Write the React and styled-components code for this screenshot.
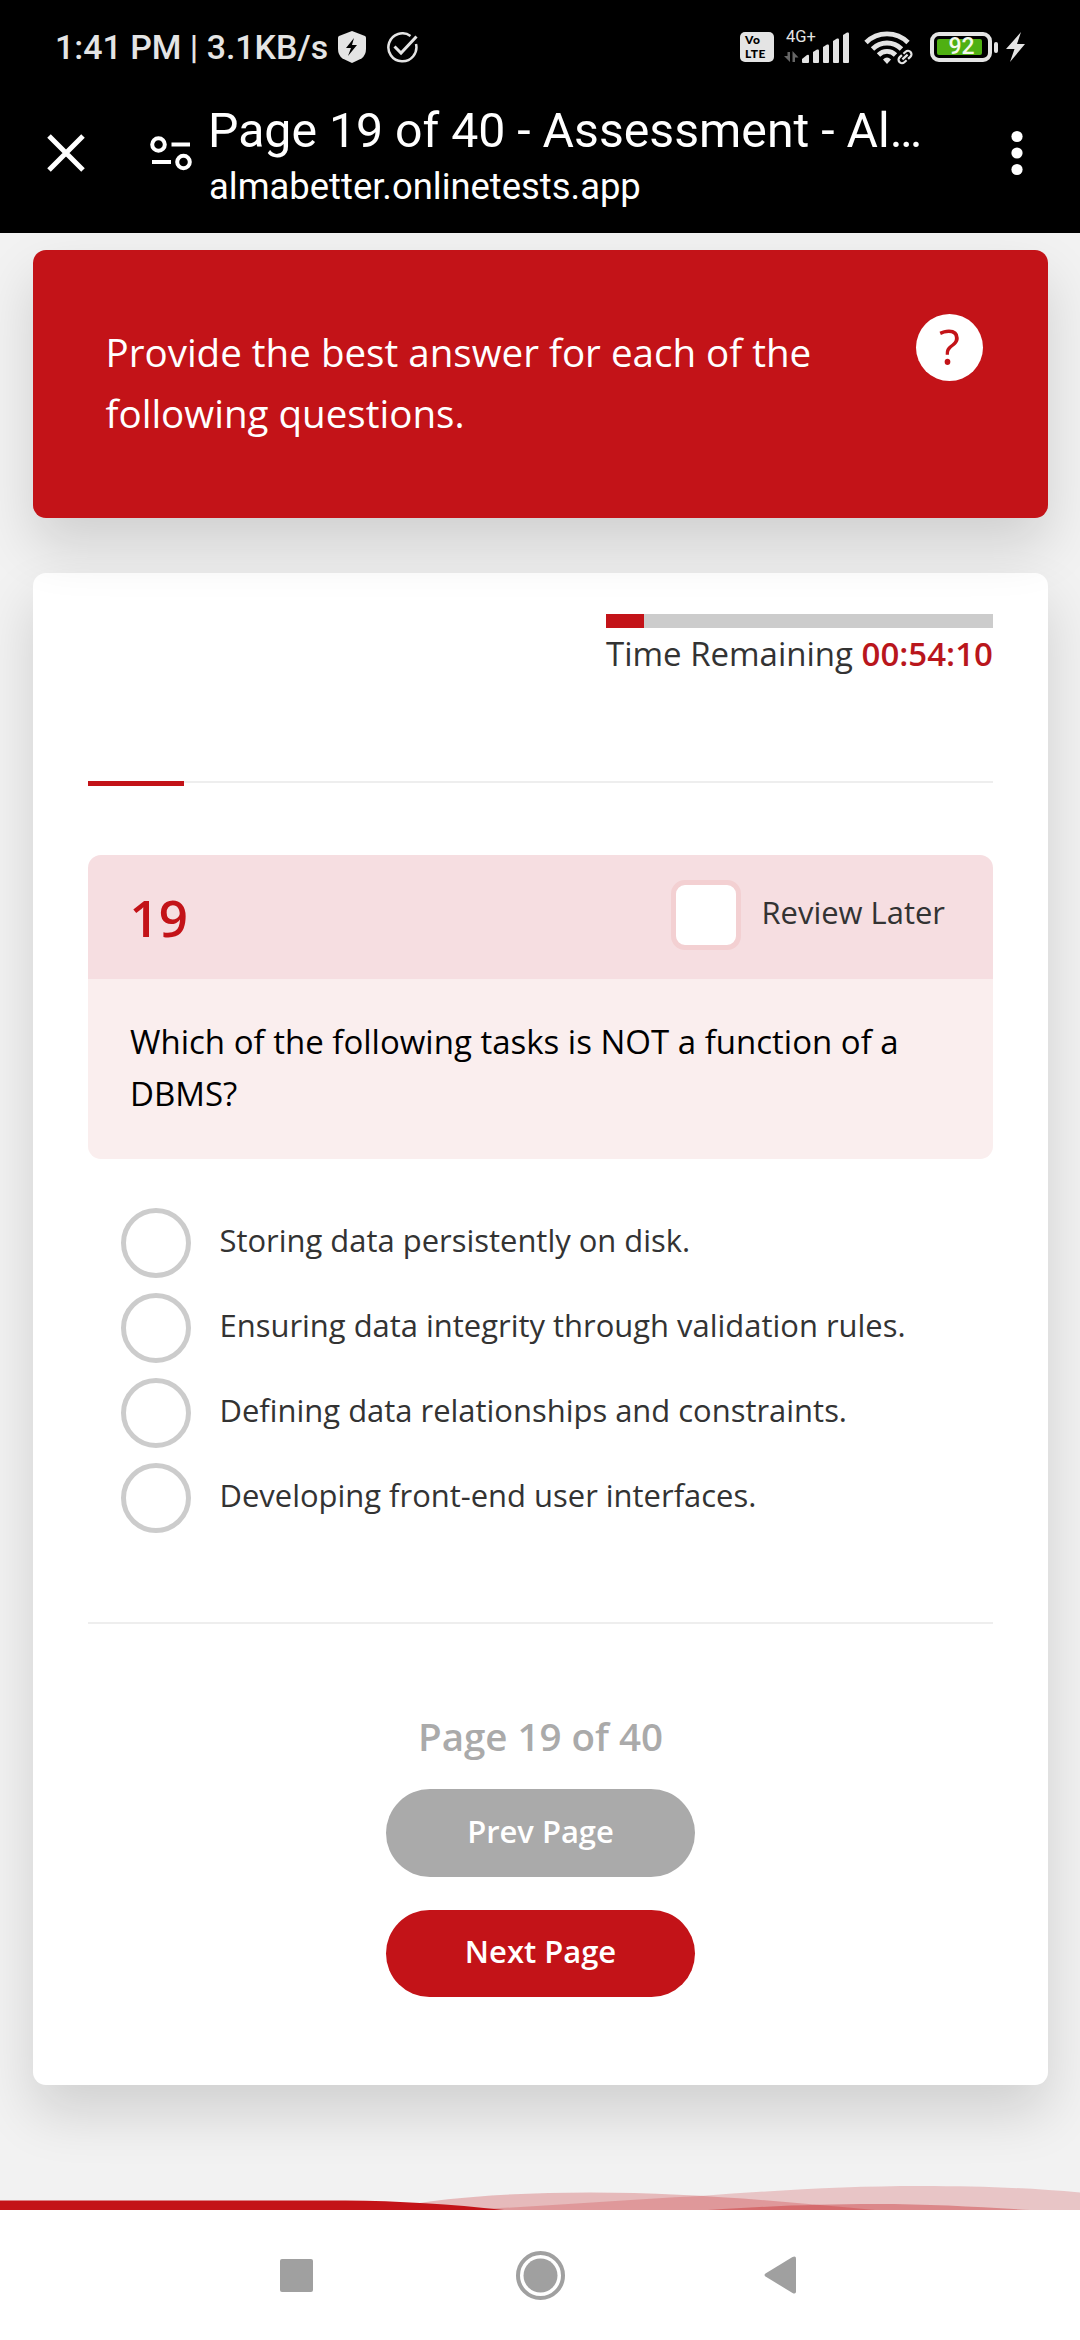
import React from 'react';
import styled, { createGlobalStyle } from 'styled-components';

const RED = '#c31318';
const SHADOW = '0 27.5px 55px rgba(0, 0, 0, 0.14)';

const GlobalStyle = createGlobalStyle`
  *, *::before, *::after { box-sizing: border-box; }
  body { margin: 0; background: #fff; }
  p, h1, h2 { margin: 0; font-weight: inherit; }
`;

const Screen = styled.div`
  display: flex;
  flex-direction: column;
  width: 1080px;
  height: 2340px;
  overflow: hidden;
  font-family: 'Open Sans', 'Noto Sans', sans-serif;
  color: #333;
`;

/* ---------- system and browser header ---------- */

const Header = styled.header`
  position: relative;
  z-index: 3;
  flex: none;
  height: 233px;
  background: #000;
  color: #fff;
  font-family: Roboto, 'Noto Sans', sans-serif;
`;

const StatusBar = styled.div`
  display: flex;
  align-items: center;
  height: 94px;
  padding: 0 55px 0 55px;
  color: #e4e4e4;
`;

const StatusText = styled.span`
  font-size: 33.9px;
  line-height: 40px;
  font-weight: 500;
  white-space: nowrap;
  margin-top: 2px;
`;

const StatusIcon = styled.svg`
  flex: none;
  display: block;
  margin-left: ${(p) => p.$gap || 0}px;
`;

const Spacer = styled.div`
  flex: 1;
`;

const VolteBadge = styled.div`
  display: flex;
  flex-direction: column;
  justify-content: center;
  width: 34px;
  height: 30px;
  padding-left: 5px;
  border-radius: 5px;
  background: #e4e4e4;
  color: #000;
  font: 900 12px/14px Lato, 'Open Sans', sans-serif;
  letter-spacing: 0.5px;
`;

const Signal = styled.div`
  position: relative;
  width: 66px;
  height: 34px;
  margin-left: 10px;
`;

const NetworkLabel = styled.span`
  position: absolute;
  left: 2px;
  top: -2px;
  font-size: 16.5px;
  line-height: 17px;
`;

const Battery = styled.div`
  display: flex;
  width: 62px;
  height: 30px;
  margin-left: 16px;
  padding: 3px;
  border: 4px solid #e4e4e4;
  border-radius: 9px;
`;

const BatteryLevel = styled.div`
  display: flex;
  align-items: center;
  justify-content: center;
  width: 45px;
  height: 16px;
  padding-left: 4px;
  border-radius: 2px;
  background: #4fb012;
  color: #f4f9ee;
  font-size: 23px;
  line-height: 16px;
  font-weight: 500;
`;

const BatteryTip = styled.div`
  width: 4px;
  height: 11px;
  margin-left: 2px;
  border-radius: 2px;
  background: #e4e4e4;
`;

const Toolbar = styled.div`
  display: flex;
  align-items: flex-start;
  padding: 8px 56px 0 46px;
`;

const ToolbarIcon = styled.svg`
  flex: none;
  display: block;
  margin: ${(p) => p.$margin};
`;

const TitleBlock = styled.div`
  flex: 1;
  min-width: 0;
  margin: 1px 0 0 16px;
  white-space: nowrap;
`;

const PageTitle = styled.h1`
  font-size: 48.2px;
  line-height: 56px;
`;

const PageUrl = styled.p`
  margin-top: 6px;
  padding-left: 1px;
  font-size: 36.4px;
  line-height: 44px;
`;

/* ---------- page ---------- */

const Content = styled.main`
  flex: 1;
  display: flex;
  flex-direction: column;
  padding-top: 17px;
  background: #f2f2f2;
`;

const Instructions = styled.section`
  position: relative;
  z-index: 1;
  display: flex;
  justify-content: space-between;
  flex: none;
  height: 268px;
  margin: 0 32px 0 33px;
  padding: 71.5px 65px 0 72.5px;
  border-radius: 13px;
  background: ${RED};
  color: #fff;
  box-shadow: ${SHADOW};
`;

const InstructionText = styled.p`
  width: 730px;
  font-size: 38.55px;
  line-height: 61.6px;
`;

const HelpButton = styled.div`
  display: flex;
  align-items: center;
  justify-content: center;
  width: 67px;
  height: 67px;
  margin-top: -7.5px;
  padding-bottom: 3px;
  border-radius: 50%;
  background: #fff;
  color: ${RED};
  font-size: 49.5px;
  line-height: 66px;
`;

const TestCard = styled.section`
  display: flex;
  flex-direction: column;
  flex: none;
  height: 1512px;
  margin: 55px 32px 0 33px;
  padding: 41px 55px 0;
  border-radius: 13px;
  background: #fff;
  box-shadow: ${SHADOW};
`;

const Timer = styled.div`
  align-self: flex-end;
  width: 387px;
`;

const TimerTrack = styled.div`
  height: 14px;
  background: #ccc;
`;

const TimerFill = styled.div`
  width: 38px;
  height: 100%;
  background: ${RED};
`;

const TimerText = styled.p`
  margin-top: 3px;
  font-size: 33px;
  line-height: 45px;
  white-space: nowrap;
`;

const TimerValue = styled.b`
  font-weight: 600;
  color: #b9161c;
`;

const Divider = styled.div`
  flex: none;
  height: 2px;
  margin-top: ${(p) => p.$top}px;
  background: #eee;
`;

const PageProgress = styled.div`
  width: 96px;
  height: 5px;
  background: ${RED};
`;

const Question = styled.div`
  flex: none;
  margin-top: 72px;
  border-radius: 13px;
  overflow: hidden;
`;

const QuestionHead = styled.div`
  display: flex;
  align-items: center;
  height: 124px;
  padding: 0 48px 0 41.5px;
  background: #f6dee1;
`;

const QuestionNumber = styled.h2`
  flex: 1;
  font-size: 51px;
  font-weight: 600;
  line-height: 66px;
  color: ${RED};
`;

const ReviewCheckbox = styled.div`
  width: 70px;
  height: 70px;
  margin: 0 20.5px 4px 0;
  border: 5px solid #f3d0d2;
  border-radius: 14px;
  background: #fff;
`;

const ReviewLabel = styled.span`
  margin-bottom: 10px;
  font-size: 30.94px;
  line-height: 42px;
  white-space: nowrap;
`;

const QuestionBody = styled.p`
  height: 180px;
  padding: 36.5px 40px 0 42px;
  background: #faeeee;
  color: #000;
  font-size: 33px;
  line-height: 52.8px;
`;

const Options = styled.div`
  display: flex;
  flex-direction: column;
  gap: 15px;
  margin: 49px 0 0 33px;
`;

const Option = styled.div`
  display: flex;
  align-items: center;
  gap: 28.5px;
  height: 70px;
`;

const Radio = styled.div`
  width: 70px;
  height: 70px;
  border: 5px solid #ccc;
  border-radius: 50%;
`;

const OptionLabel = styled.span`
  margin-bottom: 6px;
  font-size: 30.94px;
  line-height: 42px;
  white-space: nowrap;
`;

const Pager = styled.div`
  display: flex;
  flex-direction: column;
  align-items: center;
  margin-top: 86px;
`;

const PagerLabel = styled.p`
  margin-bottom: 27px;
  font-size: 38.5px;
  font-weight: 600;
  line-height: 52px;
  color: #aaa;
`;

const PagerButton = styled.div`
  display: flex;
  align-items: center;
  justify-content: center;
  width: 309px;
  height: ${(p) => (p.$primary ? 87 : 88)}px;
  margin-bottom: 33px;
  padding-bottom: 5px;
  border-radius: 44px;
  background: ${(p) => (p.$primary ? RED : '#aaa')};
  color: #fff;
  font-size: 30.94px;
  font-weight: 600;
  line-height: 42px;
`;

const Waves = styled.svg`
  display: block;
  flex: none;
  margin-top: auto;
`;

const NavBar = styled.nav`
  position: relative;
  z-index: 2;
  display: flex;
  align-items: center;
  flex: none;
  height: 130px;
  padding-left: 280px;
  background: #fff;
`;

const NavIcon = styled.svg`
  display: block;
  margin-right: ${(p) => p.$gap || 0}px;
`;

const options = [
  'Storing data persistently on disk.',
  'Ensuring data integrity through validation rules.',
  'Defining data relationships and constraints.',
  'Developing front-end user interfaces.',
];

function SystemStatus() {
  return (
    <StatusBar>
      <StatusText>1:41 PM | 3.1KB/s</StatusText>
      <StatusIcon $gap={10} width="28" height="32" viewBox="0 0 28 32">
        <path d="M14 0 27 5q1 .5 1 2v11q0 6-4.500 9.500L14 32 4.500 27.500Q0 24 0 18V7q0-1.500 1-2Z" fill="currentColor" />
        <path d="M16 7 8 17h5l-3 8 9-11h-5Z" fill="#000" />
      </StatusIcon>
      <StatusIcon $gap={21} width="31" height="31" viewBox="0 0 31 31" fill="none" stroke="currentColor" strokeWidth="2.500">
        <path d="M23.500 3.900A14 14 0 1 0 29 12" />
        <path d="m7.500 14.500 6.500 6.500L29.500 4.500" strokeWidth="3" />
      </StatusIcon>
      <Spacer />
      <VolteBadge>
        <span>Vo</span>
        <span>LTE</span>
      </VolteBadge>
      <Signal>
        <NetworkLabel>4G+</NetworkLabel>
        <StatusIcon width="66" height="34" viewBox="0 0 66 34">
          <g fill="#666">
            <path d="M3.500 22h2.500v10L0 26h3.500Z" />
            <path d="M8.500 32V21l6 6.500H11V32Z" />
          </g>
          <g fill="currentColor">
            <path d="M18 32v-3l5-4q2-1 2 1v6q0 1-1 1h-5q-1 0-1-1Z" />
            <path d="M29 22l4-2.500q2-.500 2 1V32q0 1-1 1h-4q-1 0-1-1Z" />
            <path d="M39 17l4-2.500q2-.500 2 1V32q0 1-1 1h-4q-1 0-1-1Z" />
            <path d="M49 11l4-2.500q2-.500 2 1V32q0 1-1 1h-4q-1 0-1-1Z" />
            <path d="M59 5l4-2.500q2-.500 2 1V32q0 1-1 1h-4q-1 0-1-1Z" />
          </g>
        </StatusIcon>
      </Signal>
      <StatusIcon $gap={14} width="50" height="36" viewBox="0 0 50 36" fill="none" stroke="currentColor">
        <path d="M2 13.500a30 30 0 0 1 42 0M8.500 20a20.500 20.500 0 0 1 29 0M14.500 26a12 12 0 0 1 17 0" strokeWidth="4.800" />
        <path d="M19 30.500q4-4 8 0l-4 4.500Z" fill="currentColor" stroke="none" />
        <g transform="rotate(-42 41 28)" strokeWidth="7" stroke="#000">
          <path d="M40 24.500h-3a3.500 3.500 0 0 0 0 7h3M42 24.500h3a3.500 3.500 0 0 1 0 7h-3M37.500 28h7" />
        </g>
        <g transform="rotate(-42 41 28)" strokeWidth="2.200">
          <path d="M40 24.500h-3a3.500 3.500 0 0 0 0 7h3M42 24.500h3a3.500 3.500 0 0 1 0 7h-3M37.500 28h7" />
        </g>
      </StatusIcon>
      <Battery>
        <BatteryLevel>92</BatteryLevel>
      </Battery>
      <BatteryTip />
      <StatusIcon $gap={8} width="19" height="30" viewBox="0 0 19 30">
        <path d="M15 0 0 17h8.500L4 30 19 12h-8Z" fill="currentColor" />
      </StatusIcon>
    </StatusBar>
  );
}

function BrowserToolbar() {
  return (
    <Toolbar>
      <ToolbarIcon $margin="31px 0 0 0" width="40" height="40" viewBox="0 0 40 40">
        <path d="M3 3 37 37M37 3 3 37" stroke="#fff" strokeWidth="5" />
      </ToolbarIcon>
      <ToolbarIcon $margin="33px 0 0 64px" width="42" height="36" viewBox="0 0 42 36" fill="none" stroke="#fff" strokeWidth="4">
        <circle cx="8.500" cy="9.500" r="6.300" />
        <circle cx="33.500" cy="27" r="6.300" />
        <path d="M21.500 9.500H40M2 27h19" />
      </ToolbarIcon>
      <TitleBlock>
        <PageTitle>Page 19 of 40 - Assessment - Al…</PageTitle>
        <PageUrl>almabetter.onlinetests.app</PageUrl>
      </TitleBlock>
      <ToolbarIcon $margin="27px 0 0 0" width="14" height="48" viewBox="0 0 14 48" fill="#fff">
        <circle cx="7" cy="7.500" r="5.600" />
        <circle cx="7" cy="24" r="5.600" />
        <circle cx="7" cy="40.500" r="5.600" />
      </ToolbarIcon>
    </Toolbar>
  );
}

export default function App() {
  return (
    <Screen>
      <GlobalStyle />
      <Header>
        <SystemStatus />
        <BrowserToolbar />
      </Header>

      <Content>
        <Instructions>
          <InstructionText>Provide the best answer for each of the following questions.</InstructionText>
          <HelpButton>?</HelpButton>
        </Instructions>

        <TestCard>
          <Timer>
            <TimerTrack>
              <TimerFill />
            </TimerTrack>
            <TimerText>
              Time Remaining <TimerValue>00:54:10</TimerValue>
            </TimerText>
          </Timer>

          <Divider $top={105}>
            <PageProgress />
          </Divider>

          <Question>
            <QuestionHead>
              <QuestionNumber>19</QuestionNumber>
              <ReviewCheckbox />
              <ReviewLabel>Review Later</ReviewLabel>
            </QuestionHead>
            <QuestionBody>Which of the following tasks is NOT a function of a DBMS?</QuestionBody>
          </Question>

          <Options>
            {options.map((label) => (
              <Option key={label}>
                <Radio />
                <OptionLabel>{label}</OptionLabel>
              </Option>
            ))}
          </Options>

          <Divider $top={89} />

          <Pager>
            <PagerLabel>Page 19 of 40</PagerLabel>
            <PagerButton>Prev Page</PagerButton>
            <PagerButton $primary>Next Page</PagerButton>
          </Pager>
        </TestCard>

        <Waves width="1080" height="25" viewBox="0 0 1080 25" fill={RED}>
          <path d="M385 25C430 13 510 7.500 590 7.500C690 7.500 790 17 875 25Z" opacity="0.25" />
          <path d="M440 25C540 23 610 15 700 11C780 5 850 1 920 1C980 1 1030 3 1080 7.500V25Z" opacity="0.2" />
          <path d="M708 25C770 21 820 19 875 19C930 19 980 22 1030 25Z" opacity="0.35" />
          <path d="M0 15.500H345C400 16 450 19 504 25H0Z" />
        </Waves>
      </Content>

      <NavBar>
        <NavIcon $gap={203} width="33" height="33" viewBox="0 0 33 33">
          <rect width="33" height="33" rx="2" fill="#a0a0a0" />
        </NavIcon>
        <NavIcon $gap={199} width="49" height="49" viewBox="0 0 49 49">
          <circle cx="24.500" cy="24.500" r="22.500" fill="none" stroke="#a0a0a0" strokeWidth="4" />
          <circle cx="24.500" cy="24.500" r="17" fill="#a0a0a0" />
        </NavIcon>
        <NavIcon width="32" height="38" viewBox="0 0 32 38">
          <path d="M1.500 17.500 28.500 1Q32-.500 32 2.500V35.500Q32 38.500 28.500 37L1.500 20.500Q-.500 19 1.500 17.500Z" fill="#a0a0a0" />
        </NavIcon>
      </NavBar>
    </Screen>
  );
}
